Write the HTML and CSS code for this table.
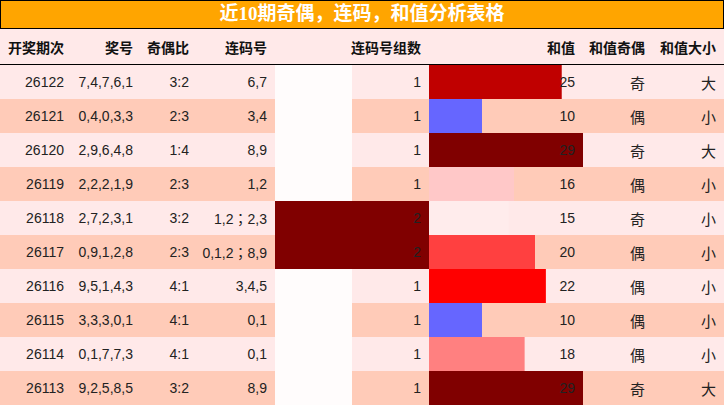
FILE: index.html
```html
<!DOCTYPE html>
<html lang="zh">
<head>
<meta charset="utf-8">
<link rel="stylesheet" href="styles.css">
</head>
<body>
<div class="title">近10期奇偶，连码，和值分析表格</div>
<table class="grid">
<colgroup>
<col class="c1"><col class="c2"><col class="c3"><col class="c4"><col class="c5"><col class="c6"><col class="c7"><col class="c8">
</colgroup>
<thead>
<tr><th>开奖期次</th><th>奖号</th><th>奇偶比</th><th>连码号</th><th>连码号组数</th><th>和值</th><th>和值奇偶</th><th>和值大小</th></tr>
</thead>
<tbody>
<tr class="a"><td>26122</td><td>7,4,7,6,1</td><td>3:2</td><td>6,7</td><td class="bar" style="--w:50%;--c:#fffcfc">1</td><td class="bar" style="--w:86.2%;--c:#c00000">25</td><td class="cj">奇</td><td class="cj">大</td></tr>
<tr class="b"><td>26121</td><td>0,4,0,3,3</td><td>2:3</td><td>3,4</td><td class="bar" style="--w:50%;--c:#fffcfc">1</td><td class="bar" style="--w:34.5%;--c:#6666ff">10</td><td class="cj">偶</td><td class="cj">小</td></tr>
<tr class="a"><td>26120</td><td>2,9,6,4,8</td><td>1:4</td><td>8,9</td><td class="bar" style="--w:50%;--c:#fffcfc">1</td><td class="bar" style="--w:100%;--c:#800000">29</td><td class="cj">奇</td><td class="cj">大</td></tr>
<tr class="b"><td>26119</td><td>2,2,2,1,9</td><td>2:3</td><td>1,2</td><td class="bar" style="--w:50%;--c:#fffcfc">1</td><td class="bar" style="--w:55.2%;--c:#ffc8c8">16</td><td class="cj">偶</td><td class="cj">小</td></tr>
<tr class="a"><td>26118</td><td>2,7,2,3,1</td><td>3:2</td><td>1,2<span class="semi">；</span>2,3</td><td class="bar" style="--w:100%;--c:#800000">2</td><td class="bar" style="--w:51.7%;--c:#ffecec">15</td><td class="cj">奇</td><td class="cj">小</td></tr>
<tr class="b"><td>26117</td><td>0,9,1,2,8</td><td>2:3</td><td>0,1,2<span class="semi">；</span>8,9</td><td class="bar" style="--w:100%;--c:#800000">2</td><td class="bar" style="--w:69%;--c:#ff4040">20</td><td class="cj">偶</td><td class="cj">小</td></tr>
<tr class="a"><td>26116</td><td>9,5,1,4,3</td><td>4:1</td><td>3,4,5</td><td class="bar" style="--w:50%;--c:#fffcfc">1</td><td class="bar" style="--w:75.9%;--c:#ff0000">22</td><td class="cj">偶</td><td class="cj">小</td></tr>
<tr class="b"><td>26115</td><td>3,3,3,0,1</td><td>4:1</td><td>0,1</td><td class="bar" style="--w:50%;--c:#fffcfc">1</td><td class="bar" style="--w:34.5%;--c:#6666ff">10</td><td class="cj">偶</td><td class="cj">小</td></tr>
<tr class="a"><td>26114</td><td>0,1,7,7,3</td><td>4:1</td><td>0,1</td><td class="bar" style="--w:50%;--c:#fffcfc">1</td><td class="bar" style="--w:62.1%;--c:#ff8080">18</td><td class="cj">偶</td><td class="cj">小</td></tr>
<tr class="b"><td>26113</td><td>9,2,5,8,5</td><td>3:2</td><td>8,9</td><td class="bar" style="--w:50%;--c:#fffcfc">1</td><td class="bar" style="--w:100%;--c:#800000">29</td><td class="cj">奇</td><td class="cj">大</td></tr>
</tbody>
</table>
</body>
</html>
```
FILE: styles.css
```css
html, body {
  margin: 0;
  padding: 0;
  background: #ffffff;
}
body {
  width: 724px;
  font-family: "Liberation Sans", "Noto Sans CJK SC", sans-serif;
}
.title {
  box-sizing: border-box;
  height: 29px;
  border: 1px solid #000;
  background: #ffa500;
  color: #fff;
  font-family: "Liberation Serif", "Noto Sans CJK SC", serif;
  font-weight: bold;
  font-size: 19px;
  line-height: 26px;
  text-align: center;
}
.grid {
  width: 724px;
  table-layout: fixed;
  border-collapse: separate;
  border-spacing: 0;
}
.c1 { width: 72px; }
.c2 { width: 69px; }
.c3 { width: 56px; }
.c4 { width: 78px; }
.c5 { width: 154px; }
.c6 { width: 154px; }
.c7 { width: 70px; }
.c8 { width: 71px; }
.grid th {
  height: 35px;
  padding: 0 8px 0 0;
  background: #ffe9e9;
  border-bottom: 1px solid #000;
  font-family: "Liberation Sans", "Noto Sans CJK SC", sans-serif;
  font-weight: bold;
  font-size: 14px;
  color: #111;
  text-align: right;
  white-space: nowrap;
}
.grid td {
  height: 34px;
  padding: 0 8px 0 0;
  font-size: 14px;
  color: #222;
  text-align: right;
  white-space: nowrap;
}
.grid tr.a td { background-color: #ffe9e9; }
.grid tr.b td { background-color: #ffcbb8; }
.grid td.bar {
  background-image: linear-gradient(var(--c), var(--c));
  background-size: var(--w) 100%;
  background-repeat: no-repeat;
  background-position: left top;
}
.grid td.cj {
  font-size: 15px;
}
.semi {
  font-family: "Noto Sans CJK JP", sans-serif;
}
```
